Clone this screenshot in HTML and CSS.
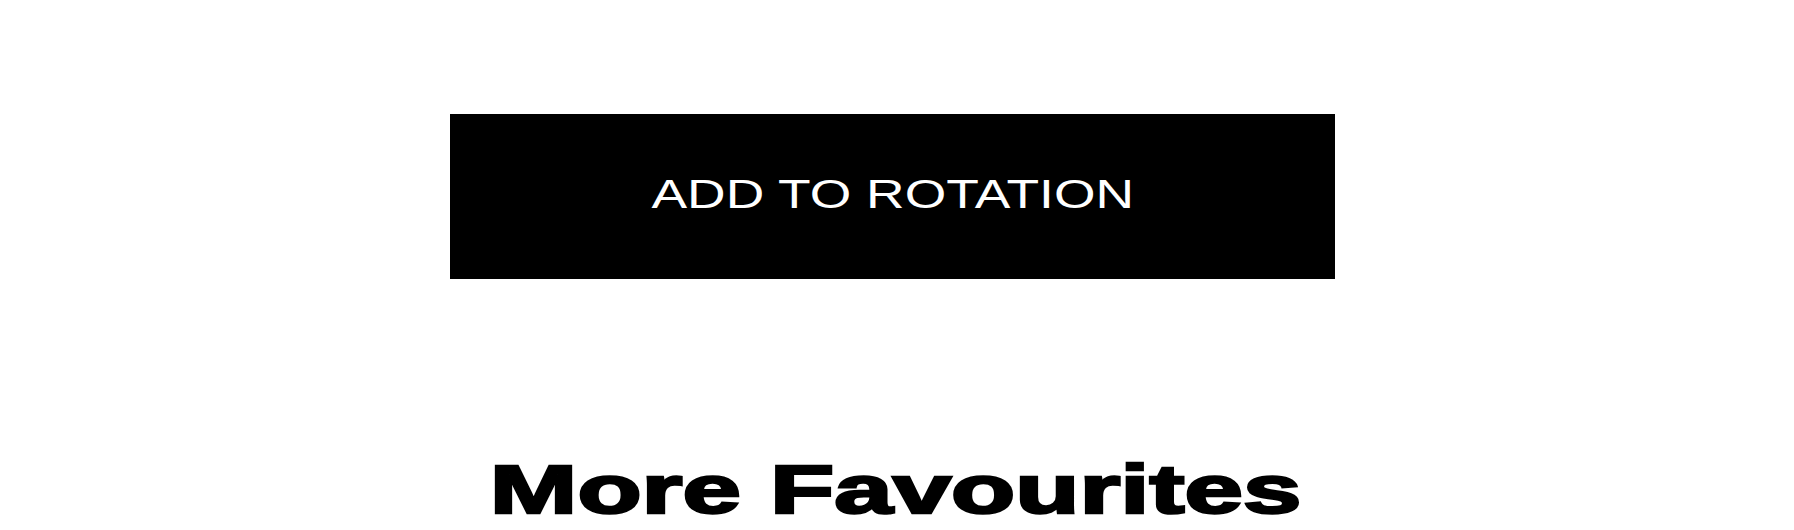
FILE: index.html
```html
<!DOCTYPE html>
<html lang="en">
<head>
<meta charset="utf-8">
<title>Add to rotation</title>
<link rel="stylesheet" href="styles.css">
</head>
<body>
  <main class="page">
    <section class="product-actions">
      <button class="rotation-btn" type="button"><span class="rotation-label">ADD TO ROTATION</span></button>
    </section>
    <section class="favourites">
      <h2 class="favourites-title"><span class="favourites-text">More Favourites</span></h2>
    </section>
  </main>
</body>
</html>
```
FILE: styles.css
```css
html, body {
  margin: 0;
  padding: 0;
  background: #ffffff;
  overflow: hidden;
}

body {
  font-family: "Liberation Sans", Arial, sans-serif;
  color: #000000;
}

.page {
  width: 885px;
  padding: 114px 0 0 450px;
}

.product-actions {
  display: flex;
}

.rotation-btn {
  width: 885px;
  height: 165px;
  margin: 0;
  padding: 0 0 5px 0;
  border: 0;
  background: #000000;
  color: #ffffff;
  display: flex;
  align-items: center;
  justify-content: center;
  font-family: "Liberation Sans", Arial, sans-serif;
  font-size: 40px;
  font-weight: 400;
  cursor: pointer;
}

/* wide, light caps for the button label */
.rotation-label {
  display: inline-block;
  transform: scaleX(1.335);
  transform-origin: center;
  white-space: nowrap;
}

.favourites {
  margin-top: 176px;
  display: flex;
  justify-content: center;
}

.favourites-title {
  margin: 0 0 0 6px;
  font-size: 68px;
  line-height: 68px;
  font-weight: 700;
  white-space: nowrap;
}

/* heavy extended display heading */
.favourites-text {
  display: inline-block;
  transform: scaleX(1.545);
  transform-origin: center;
  -webkit-text-stroke: 2.5px #000000;
}
```
